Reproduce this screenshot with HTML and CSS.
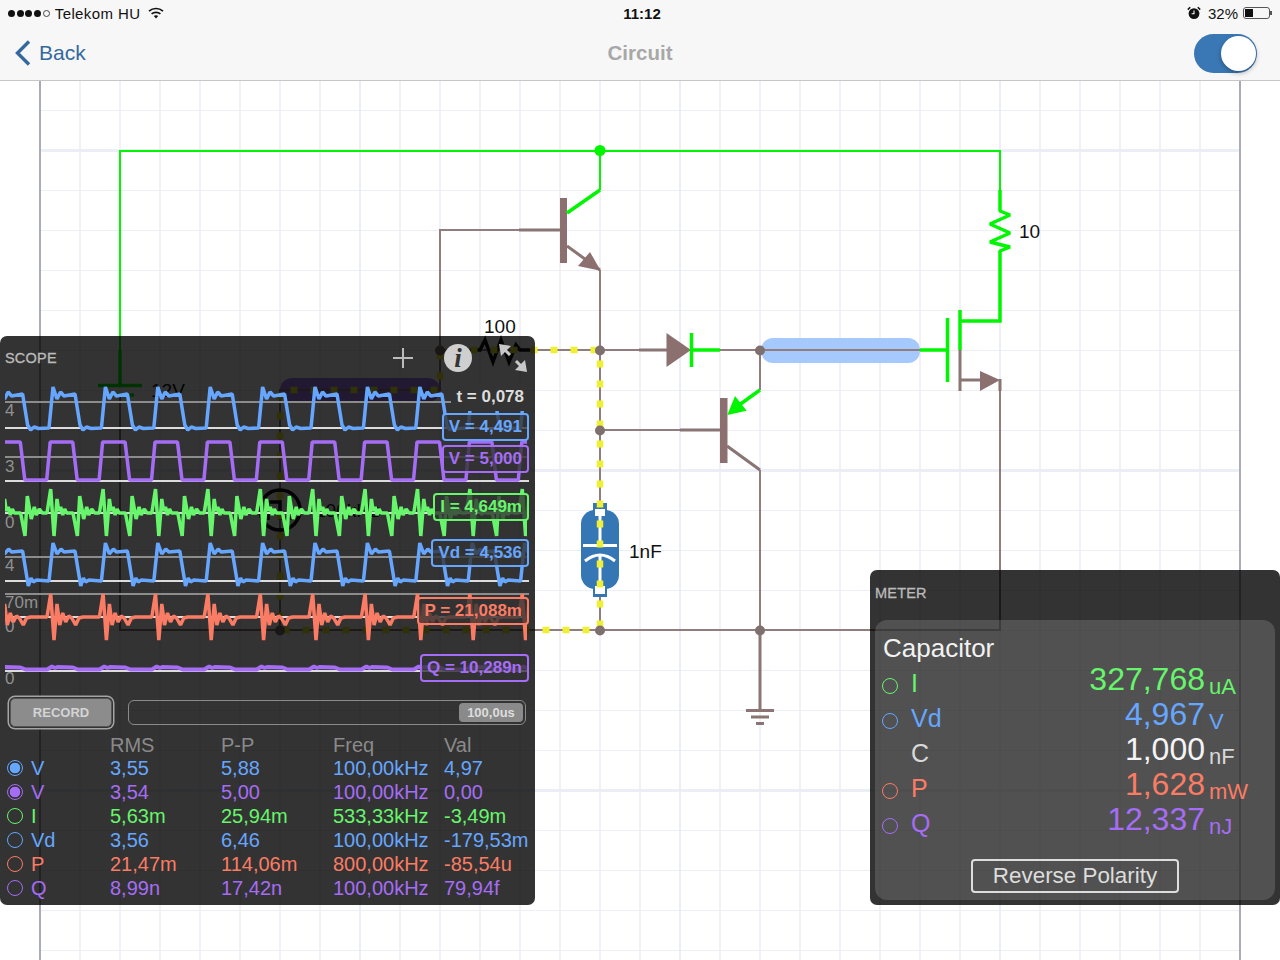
FILE: index.html
```html
<!DOCTYPE html>
<html lang="en">
<head>
    <meta charset="UTF-8">
    <meta name="viewport" content="width=device-width, initial-scale=1.0">
    <title>Circuit</title>
    <link rel="stylesheet" href="styles.css">
</head>
<body>
    <div class="app">
        <div class="topbar">
            <div class="statusbar">
                <div class="status-left">
                    <span class="signal"><i></i><i></i><i></i><i></i><i class="off"></i></span>
                    <span class="carrier">Telekom HU</span>
                    <svg class="wifi" width="16" height="12" viewBox="0 0 16 12">
                        <path d="M1 4.2C5 .6 11 .6 15 4.2" fill="none" stroke="#111" stroke-width="1.7"/>
                        <path d="M3.6 6.9C6 4.8 10 4.8 12.4 6.9" fill="none" stroke="#111" stroke-width="1.7"/>
                        <path d="M5.8 9.1C7 8.1 9 8.1 10.2 9.1L8 11.6Z" fill="#111"/>
                    </svg>
                </div>
                <div class="clock">11:12</div>
                <div class="status-right">
                    <svg width="14" height="14" viewBox="0 0 14 14">
                        <circle cx="7" cy="7.6" r="5.4" fill="#111"/>
                        <path d="M7 4.4V7.8H4.6" fill="none" stroke="#fff" stroke-width="1.1"/>
                        <path d="M.8 3.6L3.2 1.2M13.2 3.6L10.8 1.2" stroke="#111" stroke-width="1.5"/>
                    </svg>
                    <span class="percent">32%</span>
                    <span class="battery"><i></i></span>
                </div>
            </div>
            <div class="navbar">
                <div class="back">
                    <svg width="16" height="26" viewBox="0 0 16 26">
                        <path d="M14 1.5L2.5 13L14 24.5" fill="none" stroke="#34699f" stroke-width="3.4"/>
                    </svg>
                    <span>Back</span>
                </div>
                <div class="nav-title">Circuit</div>
                <div class="nav-right">
                    <span class="switch"><i></i></span>
                </div>
            </div>
        </div>

        <div class="canvas">
            <svg class="circuit" viewBox="0 81 1280 879" width="1280" height="879">
                <defs>
                    <pattern id="grid" patternUnits="userSpaceOnUse" x="20" y="90" width="40" height="40">
                        <rect x="19" y="0" width="2" height="40" fill="#f1f1f7"/>
                        <rect x="0" y="20" width="40" height="1" fill="#eeeff6"/>
                    </pattern>
                </defs>

                <rect x="40" y="81" width="1200" height="879" fill="url(#grid)"/>
                <g class="grid-major">
                    <path d="M40 150.5H1240M40 470.5H1240M40 790.5H1240"/>
                    <path class="thin" d="M360 81V960M680 81V960M1000 81V960"/>
                </g>
                <path class="sheet-edge" d="M40 81V960M1240 81V960"/>

                <rect class="hl-purple" x="280" y="378" width="160" height="24" rx="12"/>
                <rect class="hl-blue" x="761" y="338" width="159" height="25" rx="12"/>

                <!-- wires -->
                <g class="wire">
                    <path d="M440 350V230H520"/>
                    <path d="M600 270V630"/>
                    <path d="M440 350H640"/>
                    <path d="M720 350H920"/>
                    <path d="M760 350V390"/>
                    <path d="M600 430H680"/>
                    <path d="M760 470V630"/>
                    <path d="M1000 380V630H120V396"/>
                    <path d="M280 630V390H440V350"/>
                </g>
                <g class="wire heavy">
                    <path d="M519 230H560"/>
                    <path d="M567 246L600 270"/>
                    <path d="M639 350H667"/>
                    <path d="M680 430H720"/>
                    <path d="M727 446L760 470"/>
                    <path d="M760 630V710"/>
                    <path d="M960 350V391"/>
                    <path d="M960 380H982"/>
                    <path d="M1000 379V391"/>
                    <path d="M746 710.5H774"/>
                    <path d="M751 717H769"/>
                    <path d="M756 723.5H764"/>
                </g>
                <g class="parts">
                    <rect x="560" y="198" width="7" height="65"/>
                    <polygon points="600.7,270.7 578,266 590,252"/>
                    <polygon points="666.5,333 666.5,367 691,350"/>
                    <rect x="720" y="398" width="7.5" height="65"/>
                    <polygon points="980,371 980,391 1000,380"/>
                </g>

                <g class="live">
                    <path d="M120 385V151H1000V190"/>
                    <path d="M600 151V190"/>
                </g>
                <g class="live heavy">
                    <path d="M120 350V385"/>
                    <path d="M98 385.5H142"/>
                    <path d="M110 395H134"/>
                    <path d="M600 190L567 213"/>
                    <path d="M691.5 333V367"/>
                    <path d="M691 350H720"/>
                    <path d="M920 350H947"/>
                    <path d="M947.5 318V382"/>
                    <path d="M960 350V310"/>
                    <path d="M960 321H1000V270"/>
                    <path d="M760 390L735 408"/>
                    <path class="zigzag" d="M1000 190V211L1010 215L990 224L1010 233L990 242L1010 247L1000 251V270"/>
                </g>
                <polygon class="live-fill" points="727.3,415 735,396 746.7,410.7"/>
                <circle class="live-fill" cx="600" cy="150.5" r="5.5"/>

                <!-- parts that end up under the scope panel -->
                <path class="ink" d="M470 350H480L485 340L493 362L501 340L509 362L516 345L520 350H530"/>
                <circle class="ink" cx="280" cy="510" r="20"/>
                <path class="ink" d="M268 520V502H280V518H292"/>
                <text class="label" x="484" y="333">100</text>
                <text class="label" x="151" y="397">12V</text>
                <text class="label" x="315" y="517">100kHz</text>
                <text class="label" x="1019" y="238">10</text>
                <text class="label" x="629" y="558">1nF</text>

                <!-- capacitor -->
                <g class="capacitor">
                    <rect class="cap-body" x="593" y="503" width="14" height="94"/>
                    <rect class="cap-body" x="581" y="510" width="38" height="79" rx="14"/>
                    <rect class="cap-pin" x="595" y="509" width="10" height="7"/>
                    <rect class="cap-pin" x="595" y="586" width="10" height="8"/>
                    <path class="cap-line" d="M600 516V544M583 545.5H617M600 556V586"/>
                    <path class="cap-line" d="M585 561Q600 549 615 561"/>
                </g>

                <path class="current" d="M600 350V630H280V390H440V350H600"/>

                <g class="nodes">
                    <circle cx="600" cy="350.5" r="5"/>
                    <circle cx="760" cy="350.5" r="5"/>
                    <circle cx="600" cy="430.5" r="5"/>
                    <circle cx="600" cy="630.5" r="5"/>
                    <circle cx="760" cy="630.5" r="5"/>
                    <circle cx="440" cy="350.5" r="5"/>
                    <circle cx="280" cy="630.5" r="5"/>
                </g>
            </svg>

            <div class="panel scope">
                <div class="panel-head">
                    <span class="panel-title">SCOPE</span>
                    <svg class="plus" width="20" height="20" viewBox="0 0 20 20">
                        <path d="M10 0V20M0 10H20" stroke="#bbb" stroke-width="2"/>
                    </svg>
                    <span class="info">i</span>
                    <svg class="expand" width="28" height="28" viewBox="0 0 28 28">
                        <polygon points="0,0 12,2 2,12" fill="#c8c8c8"/>
                        <path d="M4 4L11 11M24 24L17 17" stroke="#c8c8c8" stroke-width="3"/>
                        <polygon points="28,28 16,26 26,16" fill="#c8c8c8"/>
                    </svg>
                </div>

                <div class="plot">
                    <svg class="plot-svg" viewBox="0 380 535 315" width="535" height="315">
                        <defs>
                            <clipPath id="plot-clip"><rect x="5" y="380" width="522" height="315"/></clipPath>
                        </defs>
                        <path class="axis" d="M5 402H529M5 457H529M5 557H529M5 594H529"/>
                        <path class="axis zero" d="M5 428H529M5 481H529M5 513H529M5 581H529M5 617H529M5 671H529"/>
                        <text class="tick" x="5" y="416">4</text>
                        <text class="tick" x="5" y="472">3</text>
                        <text class="tick" x="5" y="528">0</text>
                        <text class="tick" x="5" y="571">4</text>
                        <text class="tick" x="5" y="608">70m</text>
                        <text class="tick" x="5" y="632">0</text>
                        <text class="tick" x="5" y="684">0</text>
                        <g id="traces" clip-path="url(#plot-clip)"></g>
                    </svg>
                    <span class="readout time">t = 0,078</span>
                    <span class="readout boxed blue r1">V = 4,491</span>
                    <span class="readout boxed purple r2">V = 5,000</span>
                    <span class="readout boxed green r3">I = 4,649m</span>
                    <span class="readout boxed blue r4">Vd = 4,536</span>
                    <span class="readout boxed red r5">P = 21,088m</span>
                    <span class="readout boxed purple r6">Q = 10,289n</span>
                </div>

                <div class="scope-controls">
                    <button class="record">RECORD</button>
                    <div class="timebase"><span class="timebase-thumb">100,0us</span></div>
                </div>

                <div class="signals">
                    <div class="sig-row head">
                        <span></span><span></span><span>RMS</span><span>P-P</span><span>Freq</span><span>Val</span>
                    </div>
                    <div class="sig-row blue">
                        <span class="radio on"></span><span>V</span><span>3,55</span><span>5,88</span><span>100,00kHz</span><span>4,97</span>
                    </div>
                    <div class="sig-row purple">
                        <span class="radio on"></span><span>V</span><span>3,54</span><span>5,00</span><span>100,00kHz</span><span>0,00</span>
                    </div>
                    <div class="sig-row green">
                        <span class="radio"></span><span>I</span><span>5,63m</span><span>25,94m</span><span>533,33kHz</span><span>-3,49m</span>
                    </div>
                    <div class="sig-row blue">
                        <span class="radio"></span><span>Vd</span><span>3,56</span><span>6,46</span><span>100,00kHz</span><span>-179,53m</span>
                    </div>
                    <div class="sig-row red">
                        <span class="radio"></span><span>P</span><span>21,47m</span><span>114,06m</span><span>800,00kHz</span><span>-85,54u</span>
                    </div>
                    <div class="sig-row purple">
                        <span class="radio"></span><span>Q</span><span>8,99n</span><span>17,42n</span><span>100,00kHz</span><span>79,94f</span>
                    </div>
                </div>
            </div>

            <div class="panel meter">
                <div class="panel-head meter-head">
                    <span class="panel-title">METER</span>
                </div>
                <div class="meter-body">
                    <div class="meter-name">Capacitor</div>
                    <div class="meter-row green">
                        <span class="radio"></span><span class="meter-label">I</span><span class="num">327,768</span><span class="unit">uA</span>
                    </div>
                    <div class="meter-row blue">
                        <span class="radio"></span><span class="meter-label">Vd</span><span class="num">4,967</span><span class="unit">V</span>
                    </div>
                    <div class="meter-row white">
                        <span></span><span class="meter-label dim">C</span><span class="num">1,000</span><span class="unit dim">nF</span>
                    </div>
                    <div class="meter-row red">
                        <span class="radio"></span><span class="meter-label">P</span><span class="num">1,628</span><span class="unit">mW</span>
                    </div>
                    <div class="meter-row purple">
                        <span class="radio"></span><span class="meter-label">Q</span><span class="num">12,337</span><span class="unit">nJ</span>
                    </div>
                    <button class="reverse">Reverse Polarity</button>
                </div>
            </div>
        </div>
    </div>

    <script src="scope.js"></script>
</body>
</html>
```

FILE: styles.css
```css
* {
    margin: 0;
    padding: 0;
    box-sizing: border-box;
}

body {
    font-family: "Liberation Sans", Arial, sans-serif;
    background: white;
}

.app {
    width: 1280px;
    height: 960px;
    display: flex;
    flex-direction: column;
    overflow: hidden;
}

.blue { color: #66a6ff; }
.purple { color: #a56df5; }
.green { color: #66f56b; }
.red { color: #fb7c64; }
.white { color: #f4f4f4; }

/* top bars */
.topbar {
    background: #f7f7f7;
    border-bottom: 1px solid #c6c6c6;
    color: #111;
}

.statusbar {
    height: 26px;
    display: grid;
    grid-template-columns: 1fr auto 1fr;
    align-items: center;
    font-size: 15px;
    line-height: 25px;
}

.status-left {
    display: flex;
    align-items: center;
    padding-left: 8px;
}

.signal {
    display: flex;
    gap: 1.7px;
    margin-right: 5px;
}

.signal i {
    width: 7px;
    height: 7px;
    border-radius: 50%;
    background: #111;
}

.signal i.off {
    background: none;
    border: 1px solid #444;
}

.carrier {
    letter-spacing: 0.4px;
}

.wifi {
    margin-left: 8px;
}

.clock {
    font-weight: bold;
    padding-left: 4px;
}

.status-right {
    display: flex;
    align-items: center;
    justify-content: flex-end;
    padding-right: 10px;
}

.percent {
    margin: 0 5px 0 7px;
}

.battery {
    position: relative;
    width: 27px;
    height: 12px;
    border: 1px solid #555;
    border-radius: 3px;
    padding: 1px;
}

.battery i {
    display: block;
    width: 8px;
    height: 8px;
    background: #111;
}

.battery::after {
    content: "";
    position: absolute;
    right: -3px;
    top: 3px;
    width: 2px;
    height: 4px;
    background: #555;
}

.navbar {
    height: 54px;
    display: grid;
    grid-template-columns: 1fr auto 1fr;
    align-items: center;
}

.back {
    display: flex;
    align-items: center;
    gap: 8px;
    padding-left: 15px;
    color: #34699f;
    font-size: 21px;
}

.nav-title {
    color: #a8a8a8;
    font-size: 20.5px;
    font-weight: bold;
}

.nav-right {
    display: flex;
    justify-content: flex-end;
    padding-right: 23px;
}

.switch {
    width: 63px;
    height: 39px;
    border-radius: 20px;
    background: #3a78b5;
    display: flex;
    justify-content: flex-end;
    align-items: center;
    padding-right: 1px;
}

.switch i {
    width: 35px;
    height: 35px;
    border-radius: 50%;
    background: white;
    box-shadow: 0 2px 5px rgba(0,0,0,0.3);
}

/* circuit sheet */
.canvas {
    position: relative;
    flex: 1;
    background: white;
}

.circuit {
    position: absolute;
    top: 0;
    left: 0;
}

.grid-major path {
    fill: none;
    stroke: #eceef5;
    stroke-width: 3;
}

.grid-major path.thin {
    stroke-width: 2;
}

.sheet-edge {
    fill: none;
    stroke: #a9abb8;
    stroke-width: 2;
}

.hl-purple {
    fill: #a67cf7;
}

.hl-blue {
    fill: #a6c9fd;
}

.wire path {
    fill: none;
    stroke: #917d7d;
    stroke-width: 2;
}

.wire.heavy path {
    stroke: #8a7474;
    stroke-width: 3;
}

.parts {
    fill: #8c7070;
}

.live path {
    fill: none;
    stroke: #00f500;
    stroke-width: 2;
}

.live.heavy path {
    stroke-width: 3.5;
}

.live.heavy path.zigzag {
    stroke-linejoin: bevel;
}

.live-fill {
    fill: #00f500;
}

.ink {
    fill: none;
    stroke: #111;
    stroke-width: 3.5;
}

.label {
    font-size: 19px;
    fill: #111;
}

.cap-body {
    fill: #3576b5;
}

.cap-pin {
    fill: white;
}

.cap-line {
    fill: none;
    stroke: white;
    stroke-width: 3;
}

.current {
    fill: none;
    stroke: #efef33;
    stroke-width: 6.5;
    stroke-dasharray: 7 13;
    stroke-dashoffset: -10.5;
}

.nodes {
    fill: #7f7070;
}

/* floating panels */
.panel {
    position: absolute;
    background: rgba(0,0,0,0.8);
    border-radius: 7px;
}

.panel-head {
    height: 44px;
    display: flex;
    align-items: center;
    padding: 0 8px 0 5px;
}

.panel-title {
    color: #bbb;
    font-size: 14.5px;
    letter-spacing: 0.2px;
    -webkit-text-stroke: 0.3px #bbb;
    margin-right: auto;
}

.plus {
    margin-right: 31px;
}

.info {
    width: 28px;
    height: 28px;
    border-radius: 50%;
    background: #cfcfcf;
    color: #333;
    font-family: "Liberation Serif", serif;
    font-weight: bold;
    font-style: italic;
    font-size: 27px;
    line-height: 28px;
    text-align: center;
    margin-right: 27px;
}

.scope {
    left: 0;
    top: 255px;
    width: 535px;
    height: 569px;
}

.plot {
    position: relative;
    height: 315px;
}

.plot-svg {
    display: block;
}

.axis {
    fill: none;
    stroke: #8c8c8c;
    stroke-width: 2;
}

.axis.zero {
    stroke: #dcdcdc;
}

.tick {
    font-size: 17px;
    fill: #909090;
}

.trace {
    fill: none;
    stroke: currentColor;
    stroke-width: 3.5;
    stroke-linejoin: bevel;
}

.readout {
    position: absolute;
    right: 6px;
    height: 28px;
    line-height: 24px;
    font-size: 17px;
    font-weight: bold;
    white-space: nowrap;
}

.readout.boxed {
    border: 2px solid currentColor;
    border-radius: 4px;
    padding: 0 5px;
    background: rgba(50,50,50,0.78);
}

.readout.time {
    top: 3px;
    color: #ddd;
    padding: 2px 5px 0;
    background: #333;
}

.r1 { top: 33px; }
.r2 { top: 65px; }
.r3 { top: 113px; }
.r4 { top: 159px; }
.r5 { top: 217px; }
.r6 { top: 274px; }

.scope-controls {
    height: 34px;
    display: flex;
    align-items: center;
}

.record {
    width: 102px;
    height: 29px;
    margin: 0 16px 0 10px;
    border: 1px solid #555;
    border-radius: 5px;
    background: #8c8c8c;
    box-shadow: 0 0 0 1px #333, 0 0 0 2.5px #a4a4a4;
    color: #d4d4d4;
    font-family: inherit;
    font-size: 13px;
    font-weight: bold;
}

.timebase {
    width: 398px;
    height: 25px;
    border: 1.5px solid #8a8a8a;
    border-radius: 6px;
    display: flex;
    justify-content: flex-end;
    align-items: center;
    padding-right: 2px;
}

.timebase-thumb {
    width: 64px;
    height: 19px;
    border-radius: 4px;
    background: #8a8a8a;
    color: #ddd;
    font-size: 13px;
    font-weight: bold;
    line-height: 19px;
    text-align: center;
}

.signals {
    margin-top: 4px;
    font-size: 20px;
}

.sig-row {
    height: 24px;
    line-height: 24px;
    display: grid;
    grid-template-columns: 24px 79px 111px 112px 111px 1fr;
    align-items: center;
    padding-left: 7px;
    white-space: nowrap;
}

.sig-row.head {
    height: 23px;
    color: #8a8a8a;
}

.radio {
    display: block;
    width: 16px;
    height: 16px;
    border: 1.5px solid currentColor;
    border-radius: 50%;
}

.radio.on {
    background: radial-gradient(circle, currentColor 5px, transparent 5.6px);
}

.meter {
    right: 0;
    top: 489px;
    width: 410px;
    height: 335px;
}

.meter-head {
    height: 50px;
    padding-bottom: 4px;
}

.meter-body {
    margin: 0 5px;
    height: 280px;
    padding: 14px 0 0 7px;
    border-radius: 12px;
    background: rgba(255,255,255,0.15);
}

.meter-name {
    color: #f2f2f2;
    font-size: 26px;
    line-height: 28px;
    padding-left: 1px;
}

.meter-row {
    height: 35px;
    display: grid;
    grid-template-columns: 16px 1fr auto 70px;
    align-items: start;
}

.meter-row .radio {
    margin-top: 16px;
}

.meter-label {
    margin-left: 13px;
    padding-top: 8px;
    font-size: 25px;
    line-height: 27px;
}

.num {
    font-size: 32px;
    line-height: 35px;
}

.unit {
    padding: 14px 0 0 4px;
    font-size: 22px;
    line-height: 21px;
}

.dim {
    color: #d8d8d8;
}

.reverse {
    display: block;
    width: 208px;
    height: 34px;
    margin: 22px 0 0 89px;
    background: none;
    border: 2px solid #ddd;
    border-radius: 4px;
    color: #ddd;
    font-family: inherit;
    font-size: 22.4px;
}
```

FILE: scope.js
```js
// each trace is one period as [dx, y] points, repeated across the plot
const PERIOD = 52.4;

const traces = [
    { color: 'blue', start: -3.4, points: [[0,428],[4,387],[8,399],[11.5,392],[15,396],[26,394],[31,425],[34,430],[37.5,427],[42,428.5]] },
    { color: 'purple', start: -5.7, points: [[0,480],[3.5,442],[26,442],[30.5,480]] },
    { color: 'green', start: -5.4, points: [[0,513],[3.7,489],[7,536],[10,499],[11.7,511],[13.7,507],[15.7,515],[17.7,509],[19.7,513],[26,513],[30.4,536],[32.7,496],[36.7,519],[39.7,507],[41.7,515],[44.7,509],[47.7,513]] },
    { color: 'blue', start: -3.4, points: [[0,581],[4,543],[8,554],[12,549],[15,552],[26,551],[31.7,586],[34.4,578],[36.7,582],[40,580]] },
    { color: 'red', start: -5.4, points: [[0,617],[3.7,594],[7,640],[10,604],[12.7,625],[15.7,613],[18.7,622],[21.7,616],[24.7,618],[28.7,625],[32,618],[36,617]] },
    { color: 'purple', start: -5.4, width: 4, points: [[0,669.5],[5,666.5],[8,668],[10.5,667],[26,667.5],[31,669.5]] }
];

const group = document.getElementById('traces');

traces.forEach(trace => {
    const coords = [];
    for (let i = 0; i < 11; i++) {
        trace.points.forEach(([dx, y]) => {
            coords.push(`${(trace.start + i * PERIOD + dx).toFixed(1)},${y}`);
        });
    }
    const line = document.createElementNS('http://www.w3.org/2000/svg', 'polyline');
    line.setAttribute('points', coords.join(' '));
    line.setAttribute('class', `trace ${trace.color}`);
    if (trace.width) {
        line.style.strokeWidth = trace.width;
    }
    group.appendChild(line);
});
```
